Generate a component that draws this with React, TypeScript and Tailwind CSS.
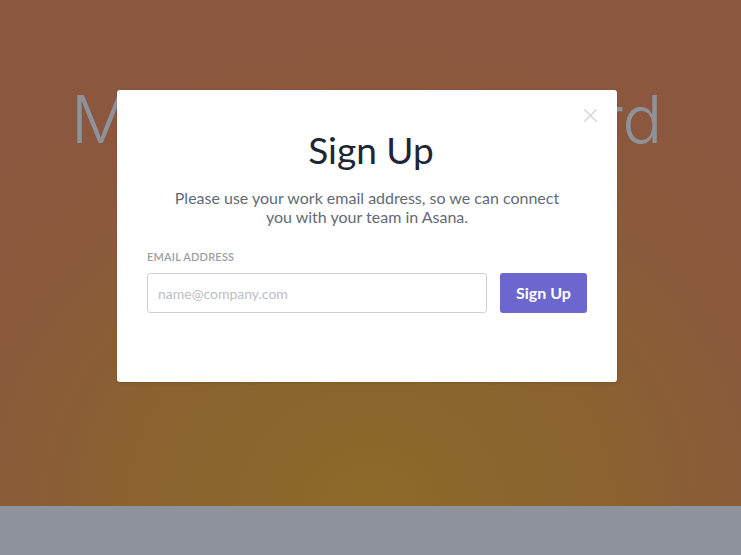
import { X } from 'lucide-react';

export default function App() {
  return (
    <div className="w-[741px] h-[555px] flex flex-col overflow-hidden font-['Lato','Open_Sans',sans-serif]">
      {/* Hero behind the overlay */}
      <div className="relative h-[506px] bg-[radial-gradient(ellipse_70%_90%_at_50%_100%,#8d6a29_0%,#8b6230_45%,#8a5b3a_75%,#8b573e_100%)]">
        <h1 className="pt-[81px] pr-[8px] text-center text-[66px] leading-[76px] font-light text-[#8e939b] tracking-[-0.3px] font-['Inter',sans-serif]">
          Move work forward
        </h1>

        {/* Modal */}
        <div className="absolute left-[117px] top-[90px] w-[500px] h-[292px] bg-white rounded-[3px] shadow-sm">
          <button className="absolute right-[15px] top-[14px] text-[#d4d6da]">
            <X size={23} strokeWidth={1.4} />
          </button>
          <div className="flex flex-col px-[30px] pt-[38px]">
            <h2 className="pl-[8px] text-center text-[37px] leading-[44px] text-[#1e2535] font-['Lato',sans-serif]">Sign Up</h2>
            <p className="mt-[16px] text-center text-[16px] leading-[19px] text-[#646a75] px-[20px]">
              Please use your work email address, so we can connect you with your team in Asana.
            </p>
            <label className="mt-[24px] text-[11px] leading-[14px] font-semibold tracking-[0.2px] text-[#9b9ea5]">EMAIL ADDRESS</label>
            <div className="mt-[9px] flex gap-[13px]">
              <input
                placeholder="name@company.com"
                className="w-[340px] h-[40px] border border-[#cfd1d4] rounded-[3px] px-[10px] text-[14px] placeholder:text-[#bbbec4] outline-none"
              />
              <button className="w-[87px] h-[40px] rounded-[3px] bg-[#6b67ce] text-white text-[16px] font-bold">Sign Up</button>
            </div>
          </div>
        </div>
      </div>
      <div className="flex-1 bg-[#8e929b]" />
    </div>
  );
}
